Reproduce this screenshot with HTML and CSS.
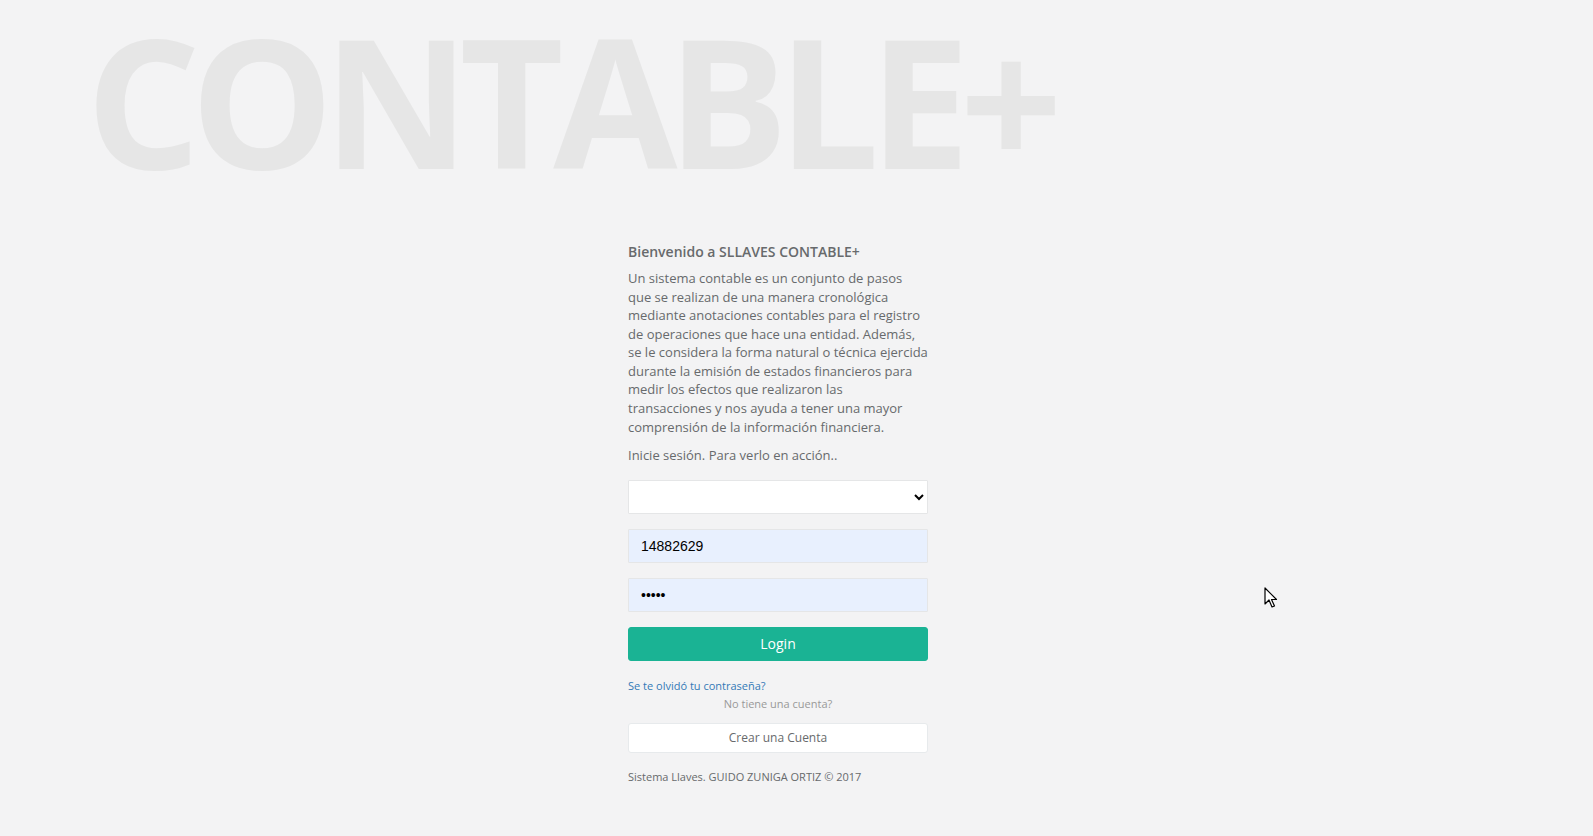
FILE: index.html
```html
<!DOCTYPE html>
<html lang="es">
<head>
<meta charset="utf-8">
<title>SLLAVES CONTABLE+</title>
<link rel="stylesheet" href="styles.css">
</head>
<body>
<div class="page">
  <h1 class="logo-name">CONTABLE+</h1>
  <div class="middle-box">
    <h3 class="welcome">Bienvenido a SLLAVES CONTABLE+</h3>
    <p class="intro">Un sistema contable es un conjunto de pasos que se realizan de una manera cronológica mediante anotaciones contables para el registro de operaciones que hace una entidad. Además, se le considera la forma natural o técnica ejercida durante la emisión de estados financieros para medir los efectos que realizaron las transacciones y nos ayuda a tener una mayor comprensión de la información financiera.</p>
    <p class="intro">Inicie sesión. Para verlo en acción..</p>
    <form class="login-form">
      <select class="form-control form-select"><option></option></select>
      <input class="form-control autofill" type="text" value="14882629">
      <input class="form-control autofill" type="password" value="12345">
      <button type="button" class="btn-login">Login</button>
      <a class="forgot" href="#">Se te olvidó tu contraseña?</a>
      <p class="muted">No tiene una cuenta?</p>
      <a class="btn-white" href="#">Crear una Cuenta</a>
    </form>
    <p class="footer">Sistema Llaves. GUIDO ZUNIGA ORTIZ © 2017</p>
  </div>
</div>
<svg class="cursor" width="14" height="22" viewBox="0 0 14 22">
  <path d="M1 1 L1 17 L5 13 L8 20 L10.5 19 L7.5 12.5 L12.5 12.5 Z" fill="#fff" stroke="#000" stroke-width="1.2" stroke-linejoin="round"/>
</svg>
</body>
</html>
```
FILE: styles.css
```css
html, body {
  margin: 0;
  padding: 0;
  background: #f3f3f4;
  height: 100%;
}
body {
  font-family: "Open Sans", "Liberation Sans", Arial, sans-serif;
  font-size: 13px;
  color: #676a6c;
  overflow: hidden;
}
.page {
  display: flex;
  flex-direction: column;
}
.logo-name {
  margin: -25px 0 0;
  padding-left: 86px;
  height: 245px;
  font-size: 180px;
  line-height: 250px;
  font-weight: 700;
  letter-spacing: -10.3px;
  color: #e6e6e6;
  white-space: nowrap;
}
.middle-box {
  width: 300px;
  margin-left: 628px;
  margin-top: 22px;
}
.welcome {
  margin: 0 0 7px;
  font-size: 14px;
  line-height: 20px;
  font-weight: 600;
  color: #676a6c;
}
.intro {
  margin: 0 0 10px;
  line-height: 18.57px;
}
.login-form {
  display: flex;
  flex-direction: column;
  margin-top: 15px;
}
.form-control {
  box-sizing: border-box;
  width: 300px;
  height: 34px;
  margin: 0 0 15px;
  padding: 6px 12px;
  border: 1px solid #e5e6e7;
  border-radius: 1px;
  background: #fff;
  font-size: 14px;
  color: #000;
  font-family: "Liberation Sans", Arial, sans-serif;
  outline: none;
}
.form-select {
  padding: 6px 8px;
}
.autofill {
  background: #e8f0fe;
}
.btn-login {
  box-sizing: border-box;
  width: 300px;
  height: 34px;
  margin: 0 0 16px;
  border: 1px solid #1ab394;
  border-radius: 3px;
  background: #1ab394;
  color: #fff;
  font-family: "Open Sans", sans-serif;
  font-size: 14px;
  cursor: pointer;
}
.forgot {
  font-size: 11px;
  line-height: 18.57px;
  color: #337ab7;
  text-decoration: none;
}
.muted {
  margin: 0 0 9px;
  text-align: center;
  font-size: 11px;
  line-height: 18.57px;
  color: #999;
}
.btn-white {
  box-sizing: border-box;
  display: block;
  height: 30px;
  line-height: 28px;
  border: 1px solid #e7eaec;
  border-radius: 3px;
  background: #fff;
  color: inherit;
  text-align: center;
  font-size: 12px;
  text-decoration: none;
}
.footer {
  margin: 15px 0 0;
  font-size: 11px;
  line-height: 18.57px;
}
.cursor {
  position: absolute;
  left: 1264px;
  top: 587px;
}
```
